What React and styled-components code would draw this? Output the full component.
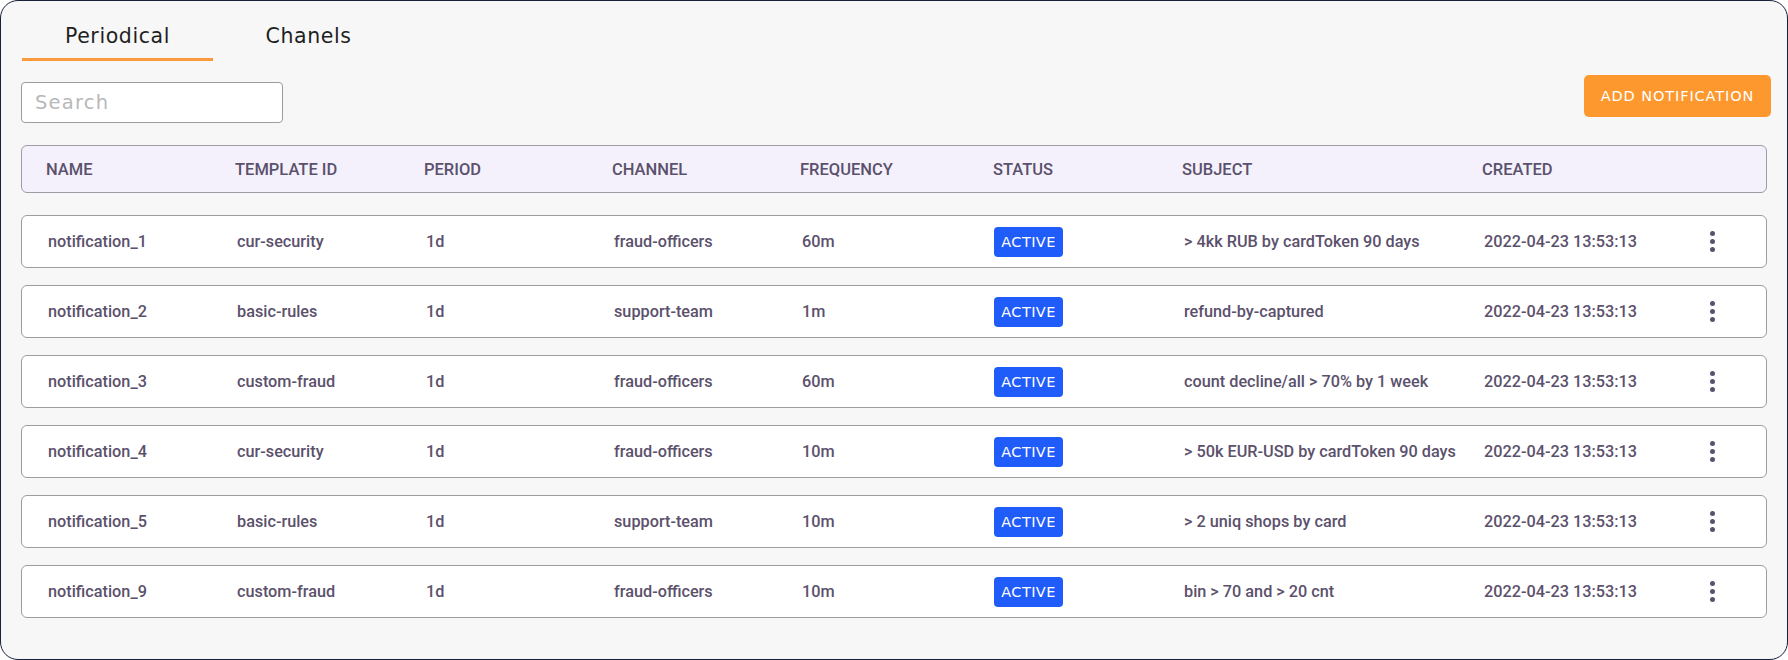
import styled, { createGlobalStyle } from "styled-components";

const GlobalStyle = createGlobalStyle`
  html, body {
    margin: 0;
    padding: 0;
    background: #ffffff;
  }
  * {
    box-sizing: border-box;
  }
`;

const Card = styled.div`
  width: 1788px;
  height: 660px;
  background: #f7f7f7;
  border: 1px solid #18213a;
  border-radius: 18px;
  padding: 12px 16px 0 20px;
  overflow: hidden;
`;

const Tabs = styled.div`
  display: flex;
  margin-left: 1px;
`;

const Tab = styled.div`
  width: 191px;
  text-align: center;
  padding: 11px 0 10px;
  font-family: "DejaVu Sans", sans-serif;
  font-size: 20.5px;
  line-height: 24px;
  letter-spacing: 0.6px;
  color: #1f1f1f;
  border-bottom: 3px solid ${(p) => (p.$active ? "#fb9a3c" : "transparent")};
`;

const Toolbar = styled.div`
  display: flex;
  justify-content: space-between;
  align-items: flex-start;
  margin-top: 14px;
`;

const Search = styled.input`
  width: 262px;
  height: 41px;
  margin-top: 7px;
  border: 1px solid #9c9c9c;
  border-radius: 4px;
  background: #ffffff;
  padding: 0 13px;
  font-family: "DejaVu Sans", sans-serif;
  font-size: 19.5px;
  letter-spacing: 1.2px;
  color: #333;
  outline: none;

  &::placeholder {
    color: #b8b8b8;
  }
`;

const AddButton = styled.button`
  width: 187px;
  height: 42px;
  border: none;
  border-radius: 5px;
  background: #fd982f;
  color: #ffffff;
  font-family: "DejaVu Sans", sans-serif;
  font-size: 14.5px;
  letter-spacing: 0.9px;
  cursor: pointer;
`;

const Table = styled.div`
  margin-top: 22px;
  padding-right: 4px;
  display: flex;
  flex-direction: column;
  gap: 17px;
`;

const columns = "189px 189px 188px 188px 193px 189px 300px 1fr 40px";

const HeaderRow = styled.div`
  display: grid;
  grid-template-columns: ${columns};
  align-items: center;
  height: 48px;
  padding: 0 34px 0 24px;
  margin-bottom: 5px;
  background: #f4f1fd;
  border: 1px solid #9d9ba3;
  border-radius: 6px;
`;

const HeadCell = styled.div`
  font-family: Roboto, "Liberation Sans", sans-serif;
  font-weight: 500;
  font-size: 16.5px;
  color: #5b516c;
  text-transform: uppercase;
  white-space: nowrap;
`;

const Row = styled.div`
  display: grid;
  grid-template-columns: ${columns};
  align-items: center;
  height: 53px;
  padding: 0 34px 0 26px;
  background: #ffffff;
  border: 1px solid #9d9d9d;
  border-radius: 6px;
`;

const Cell = styled.div`
  font-family: Roboto, "Liberation Sans", sans-serif;
  font-weight: 500;
  font-size: 16.25px;
  color: #5b516c;
  white-space: nowrap;
`;

const Badge = styled.span`
  display: inline-flex;
  align-items: center;
  justify-content: center;
  width: 69px;
  height: 30px;
  margin-left: -1px;
  border-radius: 4px;
  background: #1f5cf9;
  color: #ffffff;
  font-family: "DejaVu Sans", sans-serif;
  font-size: 14.5px;
  letter-spacing: 0.4px;
`;

const Kebab = styled.button`
  display: flex;
  flex-direction: column;
  align-items: center;
  justify-content: center;
  gap: 3px;
  width: 40px;
  height: 30px;
  padding: 0;
  border: none;
  background: transparent;
  cursor: pointer;

  span {
    width: 5px;
    height: 5px;
    border-radius: 50%;
    background: #5b516c;
  }
`;

const headers = [
  "Name",
  "Template ID",
  "Period",
  "Channel",
  "Frequency",
  "Status",
  "Subject",
  "Created",
];

const notifications = [
  {
    name: "notification_1",
    template: "cur-security",
    period: "1d",
    channel: "fraud-officers",
    frequency: "60m",
    subject: "> 4kk RUB by cardToken 90 days",
  },
  {
    name: "notification_2",
    template: "basic-rules",
    period: "1d",
    channel: "support-team",
    frequency: "1m",
    subject: "refund-by-captured",
  },
  {
    name: "notification_3",
    template: "custom-fraud",
    period: "1d",
    channel: "fraud-officers",
    frequency: "60m",
    subject: "count decline/all > 70% by 1 week",
  },
  {
    name: "notification_4",
    template: "cur-security",
    period: "1d",
    channel: "fraud-officers",
    frequency: "10m",
    subject: "> 50k EUR-USD by cardToken 90 days",
  },
  {
    name: "notification_5",
    template: "basic-rules",
    period: "1d",
    channel: "support-team",
    frequency: "10m",
    subject: "> 2 uniq shops by card",
  },
  {
    name: "notification_9",
    template: "custom-fraud",
    period: "1d",
    channel: "fraud-officers",
    frequency: "10m",
    subject: "bin > 70 and > 20 cnt",
  },
];

function App() {
  return (
    <>
      <GlobalStyle />
      <Card>
        <Tabs>
          <Tab $active>Periodical</Tab>
          <Tab>Chanels</Tab>
        </Tabs>
        <Toolbar>
          <Search placeholder="Search" />
          <AddButton>ADD NOTIFICATION</AddButton>
        </Toolbar>
        <Table>
          <HeaderRow>
            {headers.map((h) => (
              <HeadCell key={h}>{h}</HeadCell>
            ))}
            <div />
          </HeaderRow>
          {notifications.map((n) => (
            <Row key={n.name}>
              <Cell>{n.name}</Cell>
              <Cell>{n.template}</Cell>
              <Cell>{n.period}</Cell>
              <Cell>{n.channel}</Cell>
              <Cell>{n.frequency}</Cell>
              <Cell>
                <Badge>ACTIVE</Badge>
              </Cell>
              <Cell>{n.subject}</Cell>
              <Cell>2022-04-23 13:53:13</Cell>
              <Kebab aria-label="More actions">
                <span />
                <span />
                <span />
              </Kebab>
            </Row>
          ))}
        </Table>
      </Card>
    </>
  );
}

export default App;
